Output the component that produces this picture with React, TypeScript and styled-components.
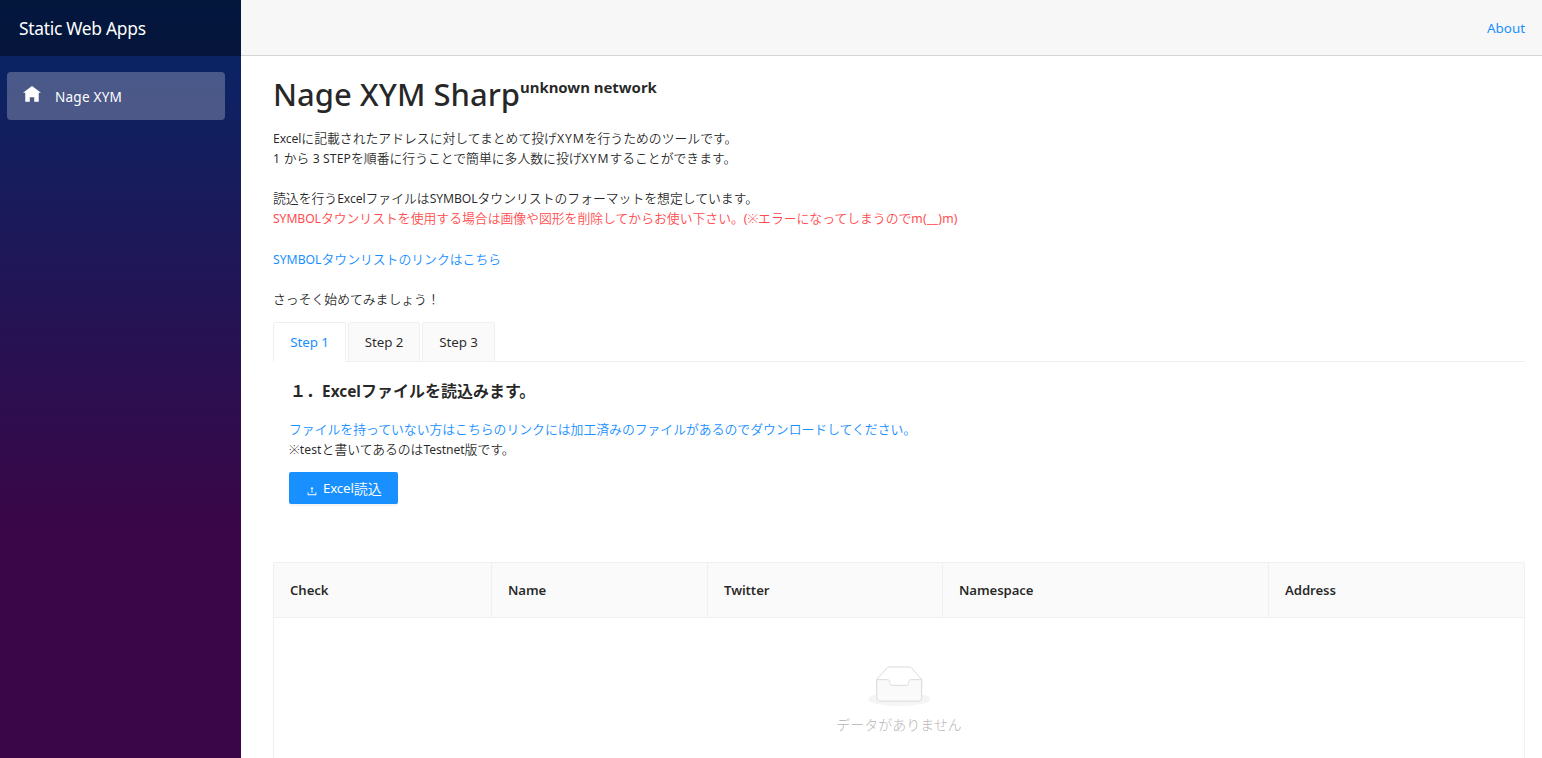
import React from 'react';
import styled, { createGlobalStyle } from 'styled-components';
import { AiOutlineUpload } from 'react-icons/ai';

const GlobalStyle = createGlobalStyle`
  *, *::before, *::after { box-sizing: border-box; }
  html, body { margin: 0; height: 100%; overflow: hidden; }
  body {
    font-family: "Noto Sans", "Noto Sans CJK JP", sans-serif;
    font-size: 12.8px;
    color: rgba(0, 0, 0, 0.85);
    background: #fff;
  }
  h1, h2, p { margin: 0; }
  a { color: #1890ff; text-decoration: none; }
`;

const Page = styled.div`
  display: flex;
  height: 758px;
  overflow: hidden;
`;

const Sidebar = styled.aside`
  flex: 0 0 241px;
  background: linear-gradient(180deg, rgb(5, 39, 103) 0%, #3a0647 70%);
  color: #fff;
`;

const Brand = styled.div`
  display: flex;
  align-items: center;
  height: 56px;
  padding: 0 0 1px 19px;
  background: rgba(0, 0, 0, 0.4);
`;

const NavItem = styled.a`
  display: flex;
  align-items: center;
  height: 48px;
  margin: 16px 16px 0 7px;
  padding: 1px 16px 0;
  border-radius: 4px;
  background: rgba(255, 255, 255, 0.25);
  color: #fff;
`;

const HomeIcon = styled.svg`
  width: 18px;
  height: 18px;
  margin: -3px 14px 0 0;
  fill: currentColor;
`;

const Main = styled.main`
  flex: 1;
  min-width: 0;
`;

const TopBar = styled.header`
  display: flex;
  align-items: center;
  justify-content: flex-end;
  height: 56px;
  padding: 1px 17px 0 0;
  border-bottom: 1px solid #d6d5d5;
  background: #f7f7f7;
`;

const Content = styled.div`
  padding: 18px 17px 0 32px;
`;

const Type = styled.span<{ $size?: number; $spacing?: number; $weight?: number }>`
  font-size: ${(p) => (p.$size ? `${p.$size}px` : '12.2px')};
  letter-spacing: ${(p) => p.$spacing ?? -0.1}px;
  font-weight: ${(p) => p.$weight ?? 400};
  white-space: nowrap;
`;

const Title = styled.h1`
  display: flex;
  align-items: flex-start;
  height: 42px;
  line-height: 40px;
`;

const Network = styled.sup`
  line-height: 22px;
`;

const Copy = styled.div<{ $top?: number }>`
  margin-top: ${(p) => p.$top ?? 0}px;
  font-weight: 350;
  font-size: 12.84px;
  line-height: 20.11px;
  white-space: nowrap;
`;

const Line = styled.p<{ $danger?: boolean }>`
  height: 20.11px;
  color: ${(p) => (p.$danger ? '#ff4d4f' : 'inherit')};
`;

const Tabs = styled.div`
  display: flex;
  gap: 2px;
  height: 40px;
  margin-top: 13px;
  border-bottom: 1px solid #f0f0f0;
`;

const Tab = styled.button<{ $active?: boolean; $width: number }>`
  width: ${(p) => p.$width}px;
  height: 40px;
  padding: 0;
  border: 1px solid #f0f0f0;
  border-bottom-color: ${(p) => (p.$active ? '#fff' : '#f0f0f0')};
  border-radius: 2px 2px 0 0;
  background: ${(p) => (p.$active ? '#fff' : '#fafafa')};
  color: ${(p) => (p.$active ? '#1890ff' : 'rgba(0, 0, 0, 0.85)')};
  font-family: inherit;
`;

const Panel = styled.section`
  height: 200px;
  padding: 16px 16px 0;
`;

const StepTitle = styled.h2`
  height: 26px;
  padding-left: 1px;
  font-size: 16px;
  line-height: 26px;
  white-space: nowrap;
`;

const UploadButton = styled.button`
  display: flex;
  align-items: center;
  width: 109px;
  height: 32px;
  margin-top: 13px;
  padding: 0 0 0 17px;
  border: 0;
  border-radius: 2px;
  background: #1890ff;
  box-shadow: 0 2px 0 rgba(0, 0, 0, 0.045);
  color: #fff;
  font-family: inherit;
  font-size: 14px;
  font-weight: 350;
  white-space: nowrap;

  svg { margin: 5px 5px 0 0; }
`;

const Table = styled.div`
  border: 1px solid #f0f0f0;
  border-bottom: 0;
  border-radius: 2px 2px 0 0;
`;

const HeadRow = styled.div`
  display: grid;
  grid-template-columns: 218px 216px 235px 326px 1fr;
  height: 55px;
  border-bottom: 1px solid #f0f0f0;
  background: #fafafa;
`;

const HeadCell = styled.div`
  display: flex;
  align-items: center;
  padding: 1px 16px 0;
  &:not(:last-child) { border-right: 1px solid #f0f0f0; }
`;

const Empty = styled.div`
  display: flex;
  flex-direction: column;
  align-items: center;
  height: 160px;
  padding-top: 48px;
  color: rgba(0, 0, 0, 0.25);
  font-size: 14px;
  font-weight: 350;
  line-height: 22px;

  svg { margin-bottom: 8px; }
`;

const columns = ['Check', 'Name', 'Twitter', 'Namespace', 'Address'];
const tabs = [
  { label: 'Step 1', width: 73 },
  { label: 'Step 2', width: 72 },
  { label: 'Step 3', width: 73 },
];

const EmptyBox = () => (
  <svg width="62.4" height="40" viewBox="0 0 64 41">
    <g transform="translate(0 1)" fill="none" fillRule="evenodd">
      <ellipse fill="#f5f5f5" cx="32" cy="33" rx="32" ry="7" />
      <g fillRule="nonzero" stroke="#d9d9d9">
        <path d="M55 12.76L44.854 1.258C44.367.474 43.656 0 42.907 0H21.093c-.749 0-1.46.474-1.947 1.257L9 12.761V22h46v-9.24z" />
        <path
          fill="#fafafa"
          d="M41.613 15.931c0-1.605.994-2.93 2.227-2.931H55v18.137C55 33.26 53.68 35 52.05 35h-40.1C10.32 35 9 33.259 9 31.137V13h11.16c1.233 0 2.227 1.323 2.227 2.928v.022c0 1.605 1.005 2.901 2.237 2.901h14.752c1.232 0 2.237-1.308 2.237-2.913v-.007z"
        />
      </g>
    </g>
  </svg>
);

export default function App() {
  return (
    <Page>
      <GlobalStyle />
      <Sidebar>
        <Brand><Type $size={17.4} $spacing={-0.28}>Static Web Apps</Type></Brand>
        <NavItem href="#">
          <HomeIcon viewBox="0 0 8 8">
            <path d="M4 0l-4 3h1v4h2v-2h2v2h2v-4.03l1 .03-4-3z" />
          </HomeIcon>
          <Type $size={13.6} $spacing={0.2}>Nage XYM</Type>
        </NavItem>
      </Sidebar>
      <Main>
        <TopBar>
          <a href="#"><Type $size={13.4} $spacing={0}>About</Type></a>
        </TopBar>
        <Content>
          <Title>
            <Type $size={31} $spacing={0} $weight={500}>Nage XYM Sharp</Type>
            <Network><Type $size={15} $spacing={-0.05} $weight={700}>unknown network</Type></Network>
          </Title>
          <Copy $top={12}>
            <Line><Type>Excel</Type>に記載されたアドレスに対してまとめて投げ<Type $spacing={0.9}>XYM</Type>を行うためのツールです。</Line>
            <Line><Type $spacing={0.3}>1 </Type>から<Type $spacing={0.1}> 3 STEP</Type>を順番に行うことで簡単に多人数に投げ<Type $spacing={0.9}>XYM</Type>することができます。</Line>
            <Line />
            <Line>読込を行う<Type>Excel</Type>ファイルは<Type>SYMBOL</Type>タウンリストのフォーマットを想定しています。</Line>
            <Line $danger><Type>SYMBOL</Type>タウンリストを使用する場合は画像や図形を削除してからお使い下さい。<Type>(</Type>※エラーになってしまうので<Type $spacing={0.25}>m(__)m)</Type></Line>
            <Line />
            <Line><a href="#"><Type $spacing={0}>SYMBOL</Type>タウンリストのリンクはこちら</a></Line>
            <Line />
            <Line>さっそく始めてみましょう！</Line>
          </Copy>
          <Tabs>
            {tabs.map((tab, i) => (
              <Tab key={tab.label} $active={i === 0} $width={tab.width}>
                <Type $size={13.4} $spacing={-0.1}>{tab.label}</Type>
              </Tab>
            ))}
          </Tabs>
          <Panel>
            <StepTitle>１．<Type $size={15.4} $spacing={0} $weight={700}>Excel</Type>ファイルを読込みます。</StepTitle>
            <Copy $top={15}>
              <Line><a href="#">ファイルを持っていない方はこちらのリンクには加工済みのファイルがあるのでダウンロードしてください。</a></Line>
              <Line>※<Type $spacing={0.1}>test</Type>と書いてあるのは<Type>Testnet</Type>版です。</Line>
            </Copy>
            <UploadButton>
              <AiOutlineUpload size={12} />
              <Type $size={13.3} $spacing={-0.15}>Excel</Type>読込
            </UploadButton>
          </Panel>
          <Table>
            <HeadRow>
              {columns.map((column) => (
                <HeadCell key={column}><Type $size={13.2} $spacing={-0.1} $weight={600}>{column}</Type></HeadCell>
              ))}
            </HeadRow>
            <Empty>
              <EmptyBox />
              データがありません
            </Empty>
          </Table>
        </Content>
      </Main>
    </Page>
  );
}
